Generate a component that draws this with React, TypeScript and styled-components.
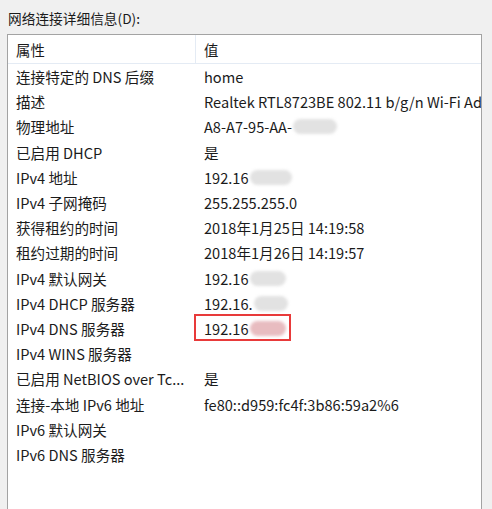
import React from 'react';
import styled, {createGlobalStyle} from 'styled-components';

const GlobalStyle = createGlobalStyle`
  html, body {
    margin: 0;
    padding: 0;
    background: #f0f0f0;
    overflow: hidden;
  }
  body {
    font-family: "Noto Sans CJK SC", "Noto Sans", sans-serif;
    color: #1b1b1b;
  }
`;

const Page = styled.div`
  width: 492px;
  height: 509px;
  padding: 8px 0 0 7px;
  box-sizing: border-box;
  display: flex;
  flex-direction: column;
  align-items: flex-start;
`;

const Title = styled.div`
  font-size: 13.7px;
  line-height: 20px;
  height: 26px;
  padding-left: 1px;
`;

const ListBox = styled.div`
  width: 475px;
  box-sizing: border-box;
  flex: 1;
  background: #fff;
  border: 1px solid #a3a3a3;
  border-bottom: none;
  display: flex;
  flex-direction: column;
  overflow: hidden;
`;

const Grid = styled.div`
  display: grid;
  grid-template-columns: 188px minmax(0, 1fr);
  align-items: center;
`;

const Header = styled(Grid)`
  height: 28px;
  border-bottom: 1px solid #e4ebf4;
`;

const HeaderCell = styled.div<{$divider?: boolean}>`
  height: 100%;
  display: flex;
  align-items: center;
  padding-left: 8px;
  font-size: 14.4px;
  border-right: ${(p) => (p.$divider ? '1px solid #e4ebf4' : 'none')};
`;

const Row = styled(Grid)`
  height: 25.2px;
  font-size: 14.6px;
  white-space: nowrap;
`;

const Cell = styled.div`
  padding-left: 8px;
  overflow: hidden;
  display: flex;
  align-items: center;
`;

const ValueCell = styled(Cell)`
  position: relative;
  overflow: visible;
`;

const Blur = styled.span<{$w: number; $tint?: string}>`
  display: inline-block;
  width: ${(p) => p.$w}px;
  height: 15px;
  margin-left: 1px;
  border-radius: 8px;
  background: ${(p) => p.$tint || '#e2e2e2'};
  filter: blur(1.5px);
`;

const Highlight = styled.span`
  position: absolute;
  left: -2px;
  top: -4px;
  width: 97px;
  height: 27px;
  border: 2.5px solid #e83a3a;
  box-sizing: border-box;
`;

type Item = {label: string; value?: React.ReactNode};

const rows: Item[] = [
    {label: '连接特定的 DNS 后缀', value: 'home'},
    {label: '描述', value: 'Realtek RTL8723BE 802.11 b/g/n Wi-Fi Adapter'},
    {label: '物理地址', value: <>A8-A7-95-AA-<Blur $w={44}/></>},
    {label: '已启用 DHCP', value: '是'},
    {label: 'IPv4 地址', value: <>192.16<Blur $w={42}/></>},
    {label: 'IPv4 子网掩码', value: '255.255.255.0'},
    {label: '获得租约的时间', value: '2018年1月25日 14:19:58'},
    {label: '租约过期的时间', value: '2018年1月26日 14:19:57'},
    {label: 'IPv4 默认网关', value: <>192.16<Blur $w={36}/></>},
    {label: 'IPv4 DHCP 服务器', value: <>192.16.<Blur $w={34}/></>},
    {
        label: 'IPv4 DNS 服务器',
        value: <>192.16<Blur $w={36} $tint="#e8bcc0"/><Highlight/></>,
    },
    {label: 'IPv4 WINS 服务器'},
    {label: '已启用 NetBIOS over Tc...', value: '是'},
    {label: '连接-本地 IPv6 地址', value: 'fe80::d959:fc4f:3b86:59a2%6'},
    {label: 'IPv6 默认网关'},
    {label: 'IPv6 DNS 服务器'},
];

const App = () => {
    return <>
        <GlobalStyle/>
        <Page>
            <Title>网络连接详细信息(D):</Title>
            <ListBox>
                <Header>
                    <HeaderCell $divider>属性</HeaderCell>
                    <HeaderCell>值</HeaderCell>
                </Header>
                {rows.map((r) => (
                    <Row key={r.label}>
                        <Cell>{r.label}</Cell>
                        <ValueCell>{r.value}</ValueCell>
                    </Row>
                ))}
            </ListBox>
        </Page>
    </>;
};

export default App;
